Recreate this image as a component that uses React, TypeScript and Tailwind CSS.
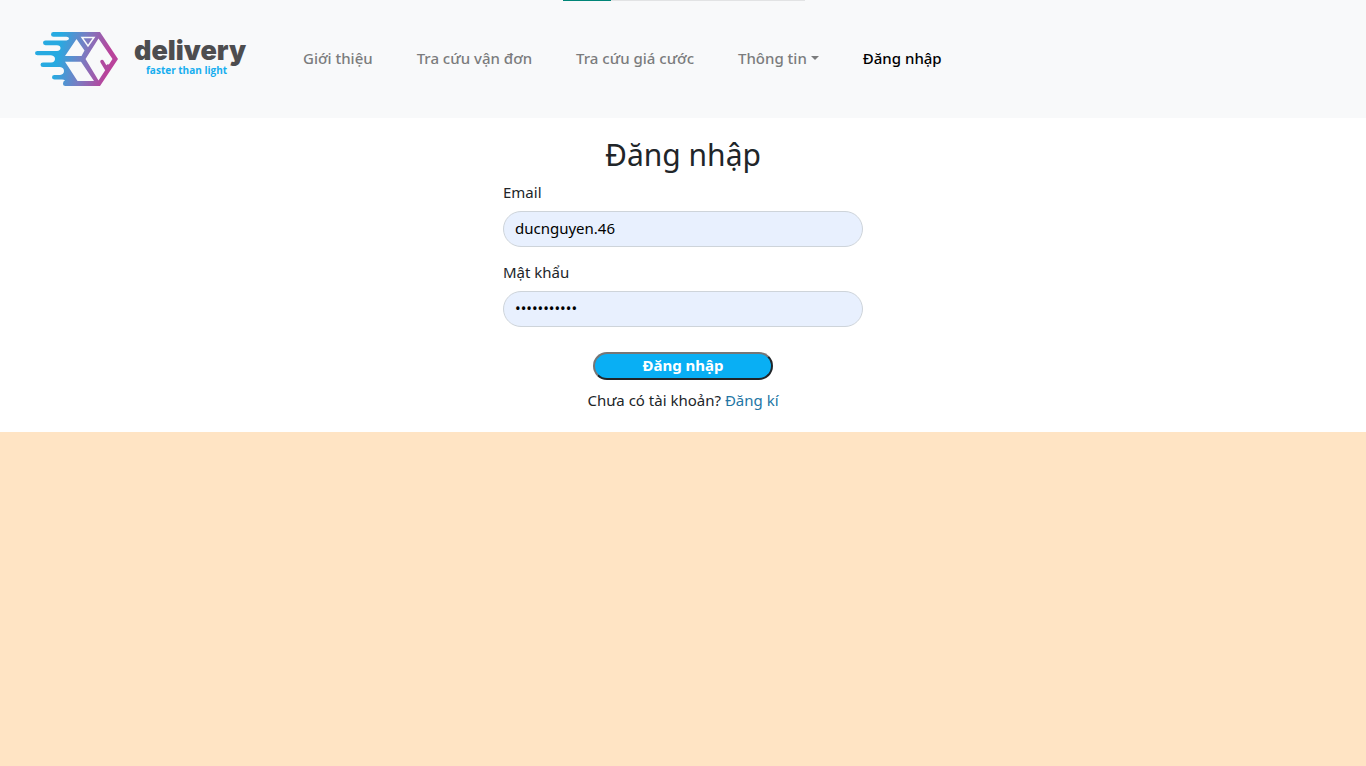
import React from "react";

const navLinks = ["Giới thiệu", "Tra cứu vận đơn", "Tra cứu giá cước"];

function LogoMark() {
  return (
    <svg viewBox="35 32 84 54" className="h-[54px] w-[84px] shrink-0" aria-hidden="true">
      <defs>
        <linearGradient id="mark" gradientUnits="userSpaceOnUse" x1="58" y1="52" x2="108" y2="62">
          <stop offset="0" stopColor="#27aae1" />
          <stop offset="0.5" stopColor="#7a7cc2" />
          <stop offset="1" stopColor="#b9439b" />
        </linearGradient>
      </defs>
      <path
        fill="url(#mark)"
        d="M53.500 32H100L118 59L100 86H65.500Q63 86 63 83.500Q63 81 65 80.500Q64 79.500 62 79.500H54.500Q52 79.500 52 77.200Q52 75 54.500 75H60Q64 74.500 64 71Q64 67.500 60 67H43Q40.500 67 40.500 64.800Q40.500 62.600 43 62.600H51Q55 62 55 59Q55 56 51 55.300H37.500Q35 55.300 35 53Q35 51 37.500 51H57Q60.500 50.500 60.500 48Q60.500 45.500 57 45.200H45.500Q43 45.200 43 42.800Q43 40.500 45.500 40.500H66.500Q69 40 69 38.700Q69 37 66.500 36.800H53.500Q51 36.800 51 34.400Q51 32 53.500 32Z"
      />
      <path fill="#f8f9fa" d="M76.500 39L65 56H81.500L84.500 50.500ZM65 61.700H81L94 81H77.500ZM98.500 38.500L85.500 59L98.500 80.500L112.500 59Z" />
      <path d="M102 61.500L106.500 69L108 66" fill="none" stroke="#b04a9f" strokeWidth="3.500" strokeLinecap="round" strokeLinejoin="round" />
      <path d="M82 37.500H94L88 46Z" fill="none" stroke="#f8f9fa" strokeWidth="1.500" />
    </svg>
  );
}

export default function App() {
  return (
    <div className="min-h-screen bg-[#ffe4c4] font-['Noto_Sans',sans-serif] text-[15px] leading-6 text-[#212529]">
      <div className="absolute top-0 left-1/2 h-px w-[242px] -translate-x-[120px] bg-[#e2e3e4]">
        <div className="h-px w-12 bg-[#008577]" />
      </div>
      <header className="flex h-[118px] items-center bg-[#f8f9fa] pl-[35px]">
        <a href="#" className="flex w-[268px] shrink-0 items-center gap-[15px]">
          <LogoMark />
          <span className="flex flex-col pb-1">
            <span className="font-[Inter,sans-serif] text-[27px] leading-[26px] font-black text-[#4d4d4f]">delivery</span>
            <span className="pl-3 font-[Open_Sans,sans-serif] text-[10px] leading-3 font-bold text-[#17aeef]">faster than light</span>
          </span>
        </a>
        <nav className="flex items-center gap-11 pb-0.5 font-medium whitespace-nowrap text-[#7b7c7d]">
          {navLinks.map((label) => (
            <a key={label} href="#">{label}</a>
          ))}
          <button type="button" className="flex items-center gap-1">
            Thông tin
            <svg viewBox="0 0 8 4" className="h-1 w-2" fill="currentColor" aria-hidden="true">
              <path d="M0 0H8L4 4Z" />
            </svg>
          </button>
          <a href="#" className="text-black" aria-current="page">Đăng nhập</a>
        </nav>
      </header>
      <main className="bg-white px-4 pt-[18px] pb-5">
        <form className="mx-auto flex max-w-[360px] flex-col" onSubmit={(e) => e.preventDefault()}>
          <h1 className="mb-1.5 text-center text-[30px] leading-[38px]">Đăng nhập</h1>
          <label htmlFor="email" className="mb-[7px]">Email</label>
          <input id="email" type="text" defaultValue="ducnguyen.46" className="mb-[13px] h-9 rounded-full border border-[#ced4da] bg-[#e8f0fe] px-[11px] pb-0.5 text-black" />
          <label htmlFor="password" className="mb-[7px]">Mật khẩu</label>
          <input id="password" type="password" defaultValue="matkhau1234" className="mb-[25px] h-9 rounded-full border border-[#ced4da] bg-[#e8f0fe] px-[11px] pb-0.5 text-black" />
          <button type="submit" className="mb-2 flex h-7 w-[180px] items-center justify-center self-center rounded-full border-2 border-t-[#767676] border-r-[#212529] border-b-[#212529] border-l-[#767676] bg-[#09aff4] pb-0.5 font-bold text-white">Đăng nhập</button>
          <p className="text-center">Chưa có tài khoản? <a href="#" className="text-[#2376a5]">Đăng kí</a></p>
        </form>
      </main>
    </div>
  );
}
